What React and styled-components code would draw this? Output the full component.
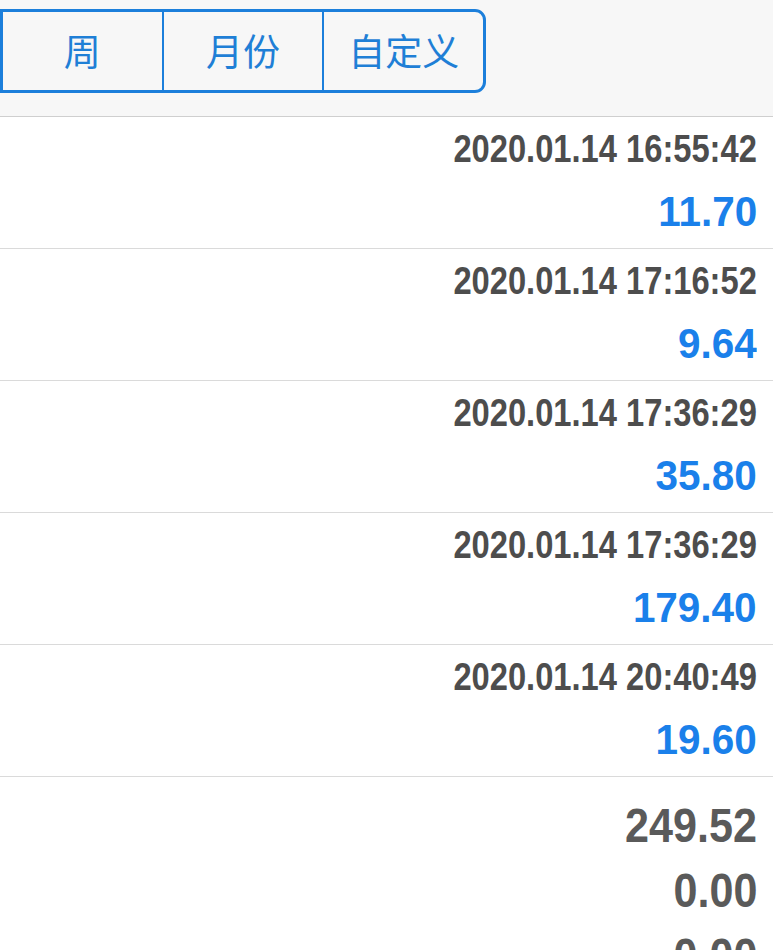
import React from 'react';
import styled, { createGlobalStyle } from 'styled-components';

const GlobalStyle = createGlobalStyle`
  html, body {
    margin: 0;
    padding: 0;
    background: #ffffff;
    overflow: hidden;
  }
  body {
    font-family: "Liberation Sans", "Noto Sans CJK SC", sans-serif;
  }
`;

const Page = styled.div`
  width: 773px;
  height: 950px;
  overflow: hidden;
  background: #ffffff;
`;

const Header = styled.div`
  height: 117px;
  box-sizing: border-box;
  background: #f7f7f7;
  border-bottom: 1px solid #cfcfcf;
  padding-top: 9px;
`;

const Segmented = styled.div`
  display: flex;
  width: 486px;
  height: 84px;
  box-sizing: border-box;
  border: 3px solid #1c7fdb;
  border-left-width: 3px;
  border-radius: 0 11px 11px 0;
  overflow: hidden;
`;

const Segment = styled.div`
  flex: 1;
  display: flex;
  align-items: center;
  justify-content: center;
  font-family: "Noto Sans CJK SC", "Noto Sans", sans-serif;
  font-size: 37px;
  color: #1f7fd6;
  border-left: ${p => (p.first ? 'none' : '2px solid #1c7fdb')};
  padding-bottom: 2px;
`;

const Row = styled.div`
  display: flex;
  flex-direction: column;
  align-items: flex-end;
  padding: 10px 16px 12px 0;
  border-bottom: 1px solid #dadada;
  gap: 15px;
`;

const Stamp = styled.div`
  font-size: 38px;
  line-height: 44px;
  font-weight: 700;
  color: #4d4d4d;
  white-space: nowrap;
  transform: scaleX(0.86);
  transform-origin: right center;
`;

const Amount = styled.div`
  font-size: 43px;
  line-height: 50px;
  font-weight: 700;
  color: #1a80ea;
  white-space: nowrap;
  transform: scaleX(0.94);
  transform-origin: right center;
`;

const Summary = styled.div`
  display: flex;
  flex-direction: column;
  align-items: flex-end;
  padding: 16px 16px 0 0;
`;

const Total = styled.div`
  font-size: 49px;
  line-height: 65px;
  font-weight: 700;
  color: #5a5a5a;
  white-space: nowrap;
  transform: scaleX(0.88);
  transform-origin: right center;
`;

const records = [
  { time: '2020.01.14 16:55:42', amount: '11.70' },
  { time: '2020.01.14 17:16:52', amount: '9.64' },
  { time: '2020.01.14 17:36:29', amount: '35.80' },
  { time: '2020.01.14 17:36:29', amount: '179.40' },
  { time: '2020.01.14 20:40:49', amount: '19.60' },
];

const totals = ['249.52', '0.00', '0.00'];

export default function App() {
  return (
    <Page>
      <GlobalStyle />
      <Header>
        <Segmented>
          <Segment first>周</Segment>
          <Segment>月份</Segment>
          <Segment>自定义</Segment>
        </Segmented>
      </Header>
      {records.map((r, i) => (
        <Row key={i}>
          <Stamp>{r.time}</Stamp>
          <Amount>{r.amount}</Amount>
        </Row>
      ))}
      <Summary>
        {totals.map((t, i) => (
          <Total key={i}>{t}</Total>
        ))}
      </Summary>
    </Page>
  );
}
